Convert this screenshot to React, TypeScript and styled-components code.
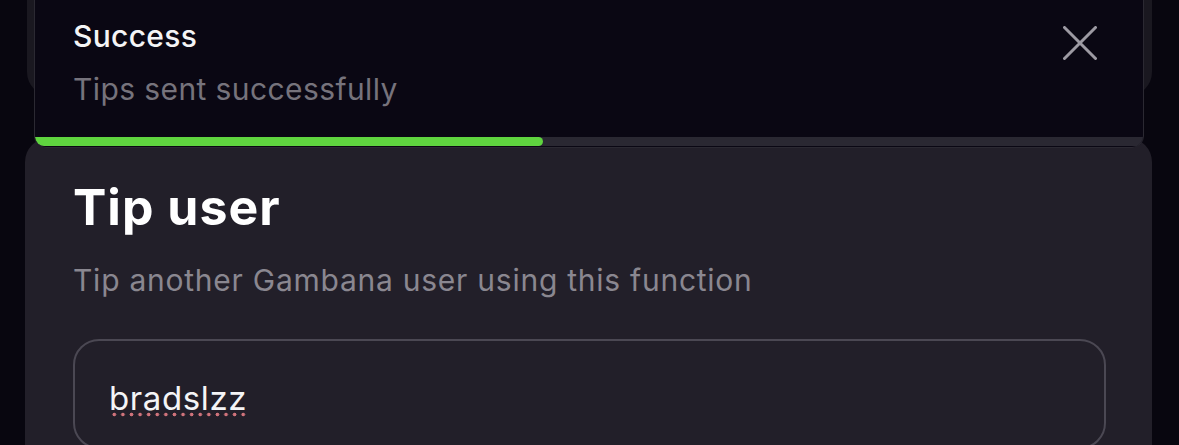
import React from "react";
import styled, { createGlobalStyle } from "styled-components";

const GlobalStyle = createGlobalStyle`
  html, body {
    margin: 0;
    padding: 0;
    background: #08060f;
    font-family: Inter, "Open Sans", sans-serif;
  }
`;

const Page = styled.div`
  position: relative;
  width: 1179px;
  height: 445px;
  overflow: hidden;
  background: #08060f;
`;

const BackCard = styled.div`
  height: 96px;
  margin: 0 27px 0 27px;
  background: #1a1820;
  border-radius: 0 0 24px 24px;
`;

const Toast = styled.div`
  position: absolute;
  top: -12px;
  left: 34px;
  width: 1110px;
  height: 160px;
  box-sizing: border-box;
  display: flex;
  flex-direction: column;
  background: #0a0713;
  border: 1px solid #2b2932;
  border-radius: 12px;
  overflow: hidden;
`;

const ToastBody = styled.div`
  display: flex;
  justify-content: space-between;
  align-items: flex-start;
  padding: 29px 46px 0 38px;
`;

const ToastText = styled.div`
  display: flex;
  flex-direction: column;
  gap: 17px;
`;

const ToastTitle = styled.div`
  font-size: 30px;
  line-height: 1.2;
  font-weight: 500;
  letter-spacing: 0.3px;
  color: #f4f4f6;
`;

const ToastMessage = styled.div`
  font-size: 30px;
  line-height: 1.2;
  letter-spacing: 0.4px;
  color: #76737c;
`;

const CloseButton = styled.button`
  margin-top: 8px;
  padding: 0;
  border: 0;
  background: none;
  width: 34px;
  height: 34px;
  color: #9d9aa3;
  cursor: pointer;
`;

const Track = styled.div`
  margin-top: auto;
  height: 9px;
  margin-bottom: 1px;
  background: #2a2832;
`;

const Progress = styled.div`
  height: 100%;
  background: #5fd43f;
  border-radius: 0 6px 6px 12px;
`;

const Card = styled.div`
  margin: 42px 27px 0 25px;
  padding: 39px 46px 0 48px;
  background: #221f29;
  border-radius: 24px 24px 0 0;
  height: 400px;
`;

const Title = styled.h1`
  margin: 0;
  font-size: 50px;
  line-height: 1.2;
  font-weight: 700;
  letter-spacing: 1px;
  color: #ffffff;
`;

const Subtitle = styled.p`
  margin: 25px 0 0;
  font-size: 30px;
  line-height: 1.2;
  letter-spacing: 0.75px;
  color: #8a8790;
`;

const Field = styled.div`
  margin-top: 41px;
  height: 110px;
  box-sizing: border-box;
  padding: 37px 34px 0;
  border: 2px solid #4b4853;
  border-radius: 26px;
  font-size: 33px;
  letter-spacing: 0.6px;
  color: #f4f4f6;
`;

const Misspelled = styled.span`
  display: inline-block;
  line-height: 37px;
  background-image: radial-gradient(circle, #d0737b 1.7px, transparent 2.1px);
  background-size: 8.6px 5px;
  background-position: 1px 100%;
  background-repeat: repeat-x;
`;

export default function App() {
  const progress = 508;
  return (
    <>
      <GlobalStyle />
      <Page>
        <BackCard />
        <Card>
          <Title>Tip user</Title>
          <Subtitle>Tip another Gambana user using this function</Subtitle>
          <Field>
            <Misspelled>bradslzz</Misspelled>
          </Field>
        </Card>
        <Toast>
          <ToastBody>
            <ToastText>
              <ToastTitle>Success</ToastTitle>
              <ToastMessage>Tips sent successfully</ToastMessage>
            </ToastText>
            <CloseButton aria-label="Close">
              <svg width="34" height="34" viewBox="0 0 34 34" fill="none" stroke="currentColor" strokeWidth="3" strokeLinecap="round">
                <path d="M1.5 1.5 L32.5 32.5 M32.5 1.5 L1.5 32.5" />
              </svg>
            </CloseButton>
          </ToastBody>
          <Track>
            <Progress style={{ width: progress }} />
          </Track>
        </Toast>
      </Page>
    </>
  );
}
